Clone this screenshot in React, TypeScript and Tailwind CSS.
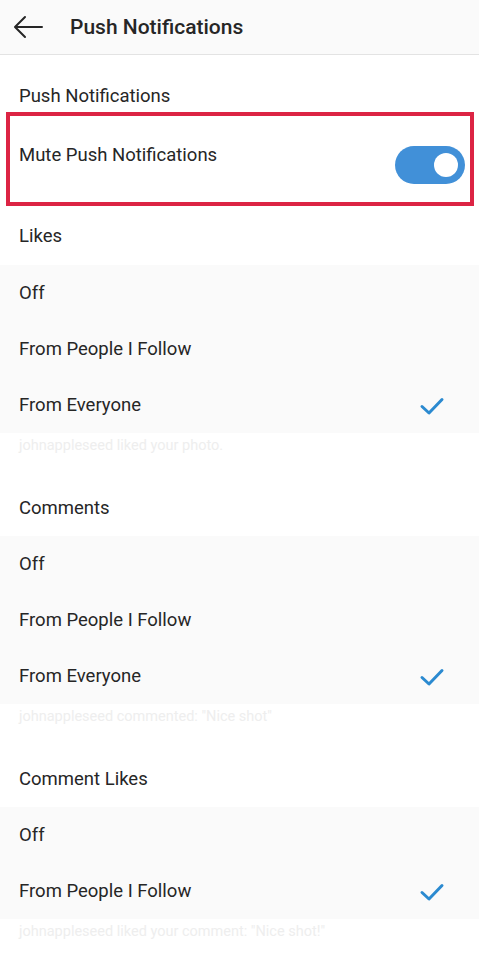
import React from "react";

const Check = () => (
  <svg width="26" height="20" viewBox="0 0 26 20" fill="none">
    <path d="M3 10.5 L10 17 L23 3.5" stroke="#2b8ad0" strokeWidth="3" strokeLinecap="round" strokeLinejoin="round" />
  </svg>
);

type Opt = { label: string; checked?: boolean };

const OptionRows = ({ options }: { options: Opt[] }) => (
  <div className="bg-[#fafafa]">
    {options.map((o) => (
      <div key={o.label} className="h-[56px] flex items-center justify-between pt-[2px] pl-[19px] pr-[34px] text-[18.5px] text-[#262626]">
        <span>{o.label}</span>
        {o.checked && <Check />}
      </div>
    ))}
  </div>
);

const Caption = ({ text }: { text: string }) => (
  <div className="h-[47px] px-[19px] pt-[3px] text-[14.5px] leading-[20px] text-[#eeeeee]">{text}</div>
);

const Group = ({ title, options, caption }: { title: string; options: Opt[]; caption: string }) => (
  <div>
    <div className="h-[56px] flex items-center pt-[1px] px-[19px] text-[18.5px] text-[#262626]">{title}</div>
    <OptionRows options={options} />
    <Caption text={caption} />
  </div>
);

export default function App() {
  return (
    <div className="w-[479px] min-h-[953px] bg-white overflow-hidden" style={{ fontFamily: "Roboto, 'Noto Sans', sans-serif" }}>
      <div className="h-[55px] bg-[#fafafa] border-b border-[#e3e3e3] flex items-center">
        <div className="w-[70px] pl-[13px] flex items-center">
          <svg width="30" height="24" viewBox="0 0 30 24" fill="none">
            <path d="M29 12 H2.5 M12 2 L2 12 L12 22" stroke="#262626" strokeWidth="2" strokeLinecap="round" strokeLinejoin="round" />
          </svg>
        </div>
        <div className="text-[21px] font-medium text-[#262626] leading-none">Push Notifications</div>
      </div>
      <div className="h-[57px] px-[19px] pt-[29px] text-[18.5px] leading-[24px] text-[#262626]">Push Notifications</div>
      <div className="ml-[6px] mr-[5px] h-[94px] border-[4px] border-[#dc2444] flex justify-between pl-[9px] pr-[5px]">
        <div className="pt-[27px] text-[18.5px] leading-[24px] text-[#262626]">Mute Push Notifications</div>
        <div className="pt-[30px]">
          <div className="w-[70px] h-[38px] rounded-full bg-[#4190d8] flex items-center justify-end pr-[7px]">
            <div className="w-[24px] h-[24px] rounded-full bg-white" />
          </div>
        </div>
      </div>
      <div className="h-[59px] flex items-center pt-[3px] px-[19px] text-[18.5px] text-[#262626]">Likes</div>
      <OptionRows options={[{ label: "Off" }, { label: "From People I Follow" }, { label: "From Everyone", checked: true }]} />
      <Caption text="johnappleseed liked your photo." />
      <Group
        title="Comments"
        options={[{ label: "Off" }, { label: "From People I Follow" }, { label: "From Everyone", checked: true }]}
        caption={'johnappleseed commented: "Nice shot"'}
      />
      <Group
        title="Comment Likes"
        options={[{ label: "Off" }, { label: "From People I Follow", checked: true }]}
        caption={'johnappleseed liked your comment: "Nice shot!"'}
      />
    </div>
  );
}
